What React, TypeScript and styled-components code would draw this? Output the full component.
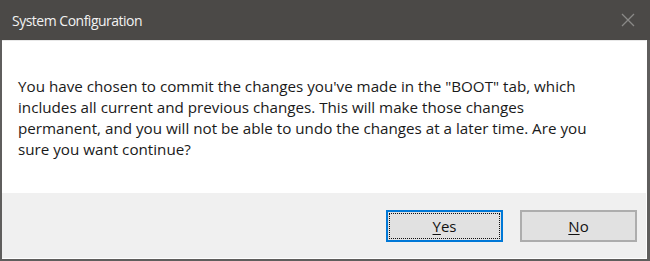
import React from "react";
import styled, { createGlobalStyle } from "styled-components";

const GlobalStyle = createGlobalStyle`
  html, body {
    margin: 0;
    padding: 0;
    background: #ffffff;
  }
`;

const Window = styled.div`
  width: 650px;
  height: 261px;
  box-sizing: border-box;
  display: flex;
  flex-direction: column;
  background: #4b4947;
  font-family: "Open Sans", "Liberation Sans", sans-serif;
`;

const TitleBar = styled.div`
  height: 40px;
  flex-shrink: 0;
  display: flex;
  align-items: center;
  justify-content: space-between;
  padding: 0 14px 0 12px;
  box-sizing: border-box;
`;

const Title = styled.span`
  color: #f2f2f2;
  font-size: 14px;
  letter-spacing: -0.5px;
`;

const CloseButton = styled.div`
  width: 16px;
  height: 16px;
  display: flex;
  align-items: center;
  justify-content: center;
`;

const Frame = styled.div`
  flex: 1;
  display: flex;
  flex-direction: column;
  background: #5f5e5d;
  padding: 0 3px 2px 2px;
`;

const Body = styled.div`
  flex: 1;
  display: flex;
  flex-direction: column;
  background: #ffffff;
  border-top: 1px solid #e8e8e8;
  border-right: 1px solid #ffffff;
  border-bottom: 1px solid #ffffff;
`;

const Message = styled.div`
  height: 152px;
  box-sizing: border-box;
  padding: 35px 0 0 16px;
  color: #1a1a1a;
  font-size: 15.2px;
  line-height: 21px;
  white-space: nowrap;
`;

const Footer = styled.div`
  flex: 1;
  background: #f0f0f0;
  display: flex;
  justify-content: flex-end;
  align-items: flex-start;
  gap: 17px;
  padding: 17px 9px 0 0;
`;

const Button = styled.button<{ $focused?: boolean }>`
  width: 117px;
  height: 32px;
  box-sizing: border-box;
  padding: 0;
  background: #e1e1e1;
  border: ${({ $focused }) =>
    $focused ? "2px solid #0078d7" : "2px solid #adadad"};
  font-family: inherit;
  font-size: 15px;
  color: #111;
  display: flex;
  align-items: center;
  justify-content: center;
  cursor: default;
`;

const FocusRing = styled.span<{ $on?: boolean }>`
  flex: 1;
  align-self: stretch;
  margin: 1px;
  display: flex;
  align-items: center;
  justify-content: center;
  border: 1px dotted ${({ $on }) => ($on ? "#111" : "transparent")};
`;

const Key = styled.span`
  text-decoration: underline;
  text-underline-offset: 2px;
`;

export default function App() {
  return (
    <>
      <GlobalStyle />
      <Window>
        <TitleBar>
          <Title>System Configuration</Title>
          <CloseButton>
            <svg width="14" height="14" viewBox="0 0 14 14">
              <path d="M1 1L13 13M13 1L1 13" stroke="#8a8987" strokeWidth="1.3" />
            </svg>
          </CloseButton>
        </TitleBar>
        <Frame>
          <Body>
            <Message>
              You have chosen to commit the changes you've made in the "BOOT" tab, which
              <br />
              includes all current and previous changes. This will make those changes
              <br />
              permanent, and you will not be able to undo the changes at a later time. Are you
              <br />
              sure you want continue?
            </Message>
            <Footer>
              <Button $focused>
                <FocusRing $on>
                  <Key>Y</Key>es
                </FocusRing>
              </Button>
              <Button>
                <FocusRing>
                  <Key>N</Key>o
                </FocusRing>
              </Button>
            </Footer>
          </Body>
        </Frame>
      </Window>
    </>
  );
}
